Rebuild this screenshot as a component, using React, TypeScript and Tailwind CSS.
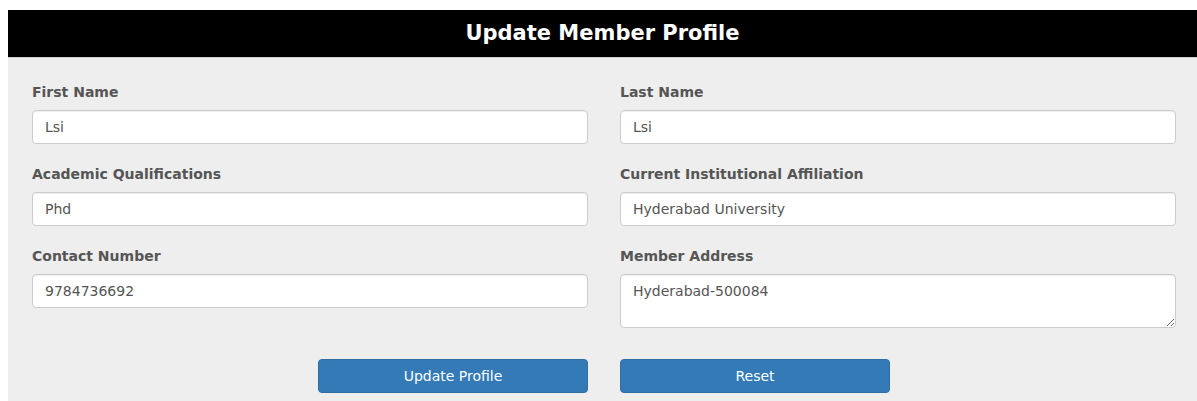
import React from 'react';

const fields = [
  { label: 'First Name', value: 'Lsi' },
  { label: 'Last Name', value: 'Lsi' },
  { label: 'Academic Qualifications', value: 'Phd' },
  { label: 'Current Institutional Affiliation', value: 'Hyderabad University' },
  { label: 'Contact Number', value: '9784736692' },
];

function Field({ label, value }: { label: string; value: string }) {
  return (
    <div className="mb-5">
      <label className="mb-2 block h-5 text-[14px] leading-5 font-bold text-[#555]">{label}</label>
      <input
        type="text"
        defaultValue={value}
        className="block h-[34px] w-full rounded border border-[#ccc] bg-white px-3 text-[14px] text-[#555] shadow-[inset_0_1px_1px_rgba(0,0,0,0.075)] outline-none"
      />
    </div>
  );
}

export default function App() {
  return (
    <div className="min-h-[401px] bg-white pt-[10px] pl-2 font-['DejaVu_Sans',sans-serif]">
      <div className="min-h-[391px] bg-[#eeeeee]">
        {/* Panel title */}
        <div className="flex h-[48px] items-center justify-center border-b border-[#cfcfcf] bg-black">
          <h3 className="text-[21px] leading-none font-bold text-white">Update Member Profile</h3>
        </div>

        <form className="pt-6 pr-[21px] pl-6" onSubmit={(e) => e.preventDefault()}>
          <div className="grid grid-cols-2 gap-x-8">
            {fields.map((f) => (
              <Field key={f.label} label={f.label} value={f.value} />
            ))}
            <div className="mb-5">
              <label className="mb-2 block h-5 text-[14px] leading-5 font-bold text-[#555]">Member Address</label>
              <textarea
                defaultValue="Hyderabad-500084"
                className="block h-[54px] w-full rounded border border-[#ccc] bg-white px-3 py-[6px] text-[14px] leading-5 text-[#555] shadow-[inset_0_1px_1px_rgba(0,0,0,0.075)] outline-none"
              />
            </div>
          </div>

          <div className="mt-[11px] grid grid-cols-2 gap-x-8">
            <div className="flex justify-end">
              <button
                type="submit"
                className="h-[34px] w-[270px] rounded border border-[#2e6da4] bg-[#337ab7] text-[14px] text-white"
              >
                Update Profile
              </button>
            </div>
            <div>
              <button
                type="reset"
                className="h-[34px] w-[270px] rounded border border-[#2e6da4] bg-[#337ab7] text-[14px] text-white"
              >
                Reset
              </button>
            </div>
          </div>
        </form>
      </div>
    </div>
  );
}
